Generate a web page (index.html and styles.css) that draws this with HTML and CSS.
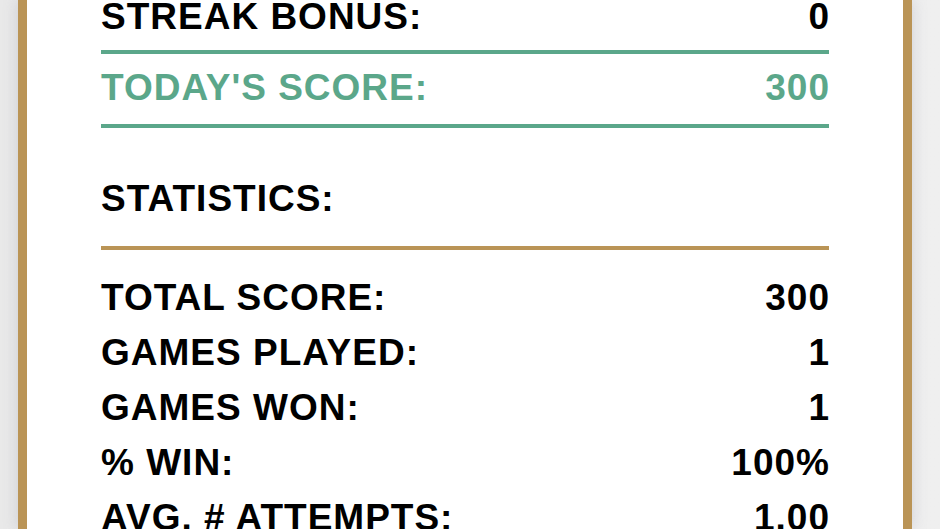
FILE: index.html
```html
<!DOCTYPE html>
<html lang="en">
<head>
<meta charset="utf-8">
<title>Score</title>
<link rel="stylesheet" href="styles.css">
</head>
<body>
<div class="page">
  <section class="card">
    <div class="row row-first"><span>STREAK BONUS:</span><span class="val">0</span></div>
    <hr class="rule rule-green rule-1">
    <div class="row row-today"><span>TODAY'S SCORE:</span><span class="val">300</span></div>
    <hr class="rule rule-green rule-2">
    <div class="row row-heading"><span>STATISTICS:</span></div>
    <hr class="rule rule-gold">
    <div class="stats">
      <div class="row"><span>TOTAL SCORE:</span><span class="val">300</span></div>
      <div class="row"><span>GAMES PLAYED:</span><span class="val">1</span></div>
      <div class="row"><span>GAMES WON:</span><span class="val">1</span></div>
      <div class="row"><span>% WIN:</span><span class="val">100%</span></div>
      <div class="row"><span>AVG. # ATTEMPTS:</span><span class="val">1.00</span></div>
    </div>
  </section>
</div>
</body>
</html>
```
FILE: styles.css
```css
html, body {
  margin: 0;
  padding: 0;
  height: 100%;
  overflow: hidden;
}
body {
  background: linear-gradient(90deg, #e9e9e9 0%, #efefef 100%);
  font-family: "Liberation Sans", Arial, sans-serif;
}
.page {
  display: flex;
  padding-left: 18px;
  height: 100%;
}
.card {
  background: #fff;
  border-left: 9px solid #ba9456;
  border-right: 9px solid #ba9456;
  padding: 0 74px;
  box-sizing: border-box;
  width: 894px;
  box-shadow: 0 0 14px rgba(120, 120, 140, 0.25);
}
.row {
  display: flex;
  justify-content: space-between;
  font-size: 37px;
  font-weight: bold;
  line-height: 55px;
  letter-spacing: 1px;
  color: #000;
}
.val {
  margin-right: -1px;
}
.row-first {
  line-height: 34px;
}
.row-today {
  color: #5ba78a;
  margin-top: 6px;
}
.row-heading {
  margin-top: 43px;
}
.rule {
  border: 0;
  height: 4px;
  margin: 0;
}
.rule-green {
  background: #5ba78a;
}
.rule-1 {
  margin-top: 16px;
}
.rule-2 {
  margin-top: 9px;
}
.rule-gold {
  background: #ba9456;
  margin-top: 20px;
}
.stats {
  margin-top: 20px;
}
```
